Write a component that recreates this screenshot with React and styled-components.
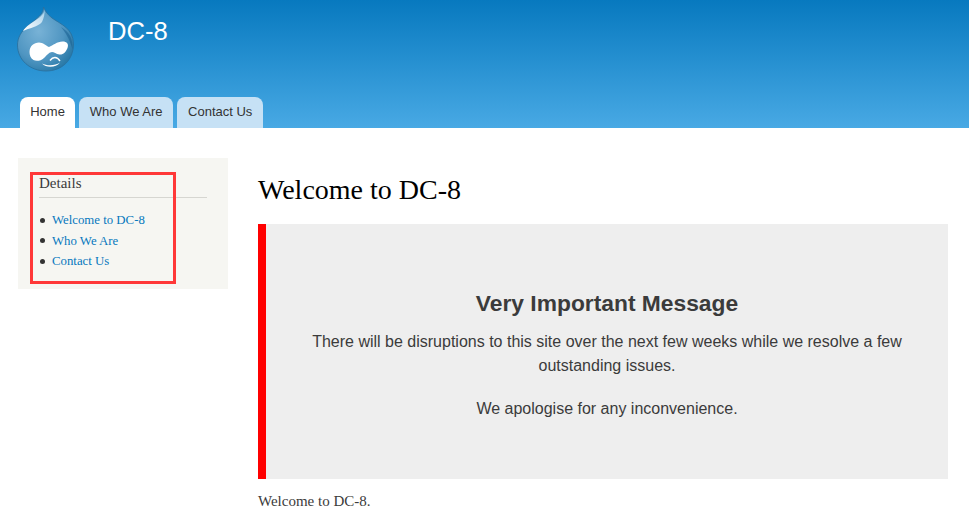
import styled, { createGlobalStyle } from 'styled-components';

const GlobalStyle = createGlobalStyle`
    html, body {
        margin: 0;
        padding: 0;
        height: 509px;
        overflow: hidden;
        background: #fff;
    }
`;

const Page = styled.div`
    position: relative;
    width: 969px;
    font-family: "Liberation Serif", serif;
    color: #3b3b3b;
`;

const Header = styled.header`
    height: 128px;
    box-sizing: border-box;
    padding: 0 0 0 20px;
    display: flex;
    flex-direction: column;
    background: linear-gradient(#0779bf, #48a9e4);
`;

const Brand = styled.div`
    display: flex;
    align-items: flex-start;
    height: 97px;
    margin-left: -5px;
`;

const Logo = styled.svg`
    width: 62px;
    height: 72px;
    flex: none;
`;

const SiteName = styled.div`
    margin: 17px 0 0 31px;
    font-family: "Liberation Sans", sans-serif;
    font-size: 25.6px;
    line-height: 28px;
    color: #fff;
`;

const Tabs = styled.nav`
    display: flex;
    gap: 4px;
`;

const Tab = styled.a`
    height: 31px;
    box-sizing: border-box;
    padding: 0 ${({ $active }) => ($active ? '10.2px' : '10.75px')};
    line-height: 29px;
    border-radius: 8px 8px 0 0;
    font-family: "Liberation Sans", sans-serif;
    font-size: 13px;
    color: #333;
    background: ${({ $active }) => ($active ? '#fff' : '#c6e1f5')};
`;

const Body = styled.div`
    display: flex;
    align-items: flex-start;
    padding: 30px 21px 0 18px;
    gap: 30px;
`;

const Sidebar = styled.aside`
    width: 210px;
    height: 131px;
    flex: none;
    box-sizing: border-box;
    padding: 16px 21px 0;
    background: #f6f6f2;
`;

const SidebarTitle = styled.h2`
    margin: 0;
    padding-bottom: 4px;
    font-size: 15px;
    line-height: 19px;
    font-weight: normal;
    border-bottom: 1px solid #d6d6d1;
`;

const Links = styled.ul`
    list-style: none;
    margin: 12px 0 0;
    padding: 0 0 0 1px;
`;

const LinkItem = styled.li`
    display: flex;
    align-items: center;
    gap: 7px;
    font-size: 12.8px;
    line-height: 20.5px;

    &::before {
        content: "";
        width: 5px;
        height: 5px;
        border-radius: 50%;
        background: #333;
    }
`;

const SideLink = styled.a`
    color: #0678be;
`;

const Main = styled.main`
    flex: 1;
    min-width: 0;
`;

const Title = styled.h1`
    margin: 0;
    padding-top: 17px;
    font-size: 28px;
    line-height: 30px;
    font-weight: normal;
    color: #000;
`;

const Notice = styled.section`
    margin-top: 19px;
    height: 255px;
    box-sizing: border-box;
    padding: 66px 38px 0;
    border-left: 8px solid #f00;
    background: #eee;
    font-family: "Liberation Sans", sans-serif;
    font-size: 16px;
    line-height: 24px;
    text-align: center;
    color: #3b3b3b;
`;

const NoticeTitle = styled.h2`
    margin: 0 0 14px;
    font-size: 22.8px;
    line-height: 26px;
    font-weight: bold;
`;

const NoticeText = styled.p`
    margin: 0 0 19px;
`;

const Footnote = styled.p`
    margin: 13px 0 0;
    font-size: 15px;
    line-height: 18px;
    color: #3b3b3b;
`;

// annotation drawn over the sidebar
const Highlight = styled.div`
    position: absolute;
    left: 30px;
    top: 172px;
    width: 146px;
    height: 112px;
    box-sizing: border-box;
    border: 3px solid #ff3838;
`;

const DrupalLogo = () => (
    <Logo viewBox="0 0 62 72">
        <defs>
            <radialGradient id="drop" cx="38%" cy="38%" r="68%">
                <stop offset="0" stopColor="#78b2d6" />
                <stop offset="0.65" stopColor="#5096c2" />
                <stop offset="1" stopColor="#2a7aa8" />
            </radialGradient>
            <linearGradient id="shine" x1="0" y1="1" x2="1" y2="0">
                <stop offset="0" stopColor="#ffffff" />
                <stop offset="1" stopColor="#a5cfe9" />
            </linearGradient>
        </defs>
        <path
            d="M28.5 7 C29 14 22 18 14 25 C6 31 2.5 38 2.5 45 C2.5 60 15 71 31 71 C47 71 58.5 60 58.5 44 C58.5 28 45 24 37 18 C33 15 30 11 28.5 7 Z"
            fill="url(#drop)"
            stroke="#2a6f9c"
            strokeWidth="0.8"
        />
        <path d="M29.5 9 C30 15 22 19 15 24 C11 27 9 29 8 31 C14 28 23 27 27 22 C29 18 30 13 29.5 9 Z" fill="url(#shine)" />
        <path d="M46 27 C54 32 58 38 57.5 49 C54 38 51 33 46 27 Z" fill="#175f8f" opacity="0.55" />
        <path
            d="M14.5 52 C14.5 46 19 42.5 24 42.5 C28 42.5 31 45.5 34 47 C38 45.5 42 41.5 47.5 41.5 C52 41.5 54 44 52.5 48 C51 52 48 55 44.5 54.5 C41 54 39 52 37 52 C34.5 52 32 55 29 58 C26 61 21 61.5 18.5 60 C15.5 58.5 14.5 55 14.5 52 Z"
            fill="#fff"
        />
        <path d="M27 63.5 C32 66 40 66 45 62.5 C41 68 31 68 27 63.5 Z" fill="#fff" />
        <path d="M35 60.5 C38 56.5 42 56.5 45 61" fill="none" stroke="#fff" strokeWidth="1.4" />
    </Logo>
);

const App = () => {
    return (
        <Page>
            <GlobalStyle />
            <Header>
                <Brand>
                    <DrupalLogo />
                    <SiteName>DC-8</SiteName>
                </Brand>
                <Tabs>
                    <Tab $active>Home</Tab>
                    <Tab>Who We Are</Tab>
                    <Tab>Contact Us</Tab>
                </Tabs>
            </Header>
            <Body>
                <Sidebar>
                    <SidebarTitle>Details</SidebarTitle>
                    <Links>
                        <LinkItem><SideLink>Welcome to DC-8</SideLink></LinkItem>
                        <LinkItem><SideLink>Who We Are</SideLink></LinkItem>
                        <LinkItem><SideLink>Contact Us</SideLink></LinkItem>
                    </Links>
                </Sidebar>
                <Main>
                    <Title>Welcome to DC-8</Title>
                    <Notice>
                        <NoticeTitle>Very Important Message</NoticeTitle>
                        <NoticeText>
                            There will be disruptions to this site over the next few weeks while we resolve a few outstanding issues.
                        </NoticeText>
                        <NoticeText>We apologise for any inconvenience.</NoticeText>
                    </Notice>
                    <Footnote>Welcome to DC-8.</Footnote>
                </Main>
            </Body>
            <Highlight />
        </Page>
    );
};

export default App;
